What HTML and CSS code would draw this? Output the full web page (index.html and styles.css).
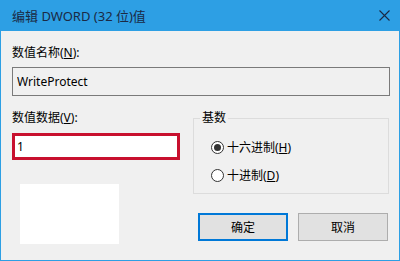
FILE: index.html
```html
<!DOCTYPE html>
<html>
<head>
  <meta charset="utf-8">
  <title>编辑 DWORD (32 位)值</title>
  <link rel="stylesheet" href="styles.css">
</head>
<body>
  <div class="dialog">
    <div class="title-bar">
      <span class="title">编辑 DWORD (32 位)值</span>
      <button class="close-btn" aria-label="关闭">
        <svg width="11" height="11" viewBox="0 0 11 11"><path d="M0.5 0.5L10.5 10.5M10.5 0.5L0.5 10.5" stroke="#1b2a44" stroke-width="1.1"/></svg>
      </button>
    </div>

    <div class="content">
      <label class="field-label" for="value-name">数值名称(<u>N</u>):</label>
      <input type="text" id="value-name" class="name-input" value="WriteProtect" readonly />

      <div class="data-row">
        <div class="left-col">
          <label class="field-label data-label" for="value-data">数值数据(<u>V</u>):</label>
          <input type="text" id="value-data" class="data-input" value="1" />
          <div class="blank-box"></div>
        </div>

        <div class="right-col">
          <fieldset class="base-group">
            <legend>基数</legend>
            <label class="radio">
              <input type="radio" name="base" checked />
              <span class="radio-mark"></span>
              <span>十六进制(<u>H</u>)</span>
            </label>
            <label class="radio">
              <input type="radio" name="base" />
              <span class="radio-mark"></span>
              <span>十进制(<u>D</u>)</span>
            </label>
          </fieldset>

          <div class="button-group">
            <button class="btn btn-default">确定</button>
            <button class="btn">取消</button>
          </div>
        </div>
      </div>
    </div>
  </div>
</body>
</html>
```

FILE: styles.css
```css
* {
  box-sizing: border-box;
}

body {
  margin: 0;
  background-color: #f0f0f0;
  font-family: "Noto Sans", "Noto Sans CJK SC", sans-serif;
  font-size: 12px;
  color: #000000;
}

.dialog {
  width: 400px;
  height: 261px;
  background-color: #f0f0f0;
  border: 1px solid #2d9fe4;
  border-top: none;
}

.title-bar {
  height: 31px;
  background-color: #2d9fe4;
  display: flex;
  align-items: center;
  justify-content: space-between;
  padding-left: 11px;
  padding-right: 9px;
}

.title {
  color: #1b2a44;
  font-size: 13px;
}

.close-btn {
  background: none;
  border: none;
  padding: 0;
  width: 11px;
  height: 11px;
  display: flex;
}

.content {
  padding: 14px 9px 0 11px;
}

.field-label {
  display: block;
  line-height: 16px;
  margin-bottom: 6px;
}

.name-input {
  display: block;
  width: 100%;
  height: 29px;
  border: 1px solid #7a7a7a;
  background-color: #f0f0f0;
  padding: 0 4px;
  font: inherit;
  color: #000000;
  outline: none;
}

.data-row {
  display: grid;
  grid-template-columns: 168px 196px;
  column-gap: 13px;
  margin-top: 14px;
}

.data-label {
  margin-bottom: 7px;
}

.data-input {
  display: block;
  width: 168px;
  height: 27px;
  border: 3px solid #c8102e;
  background-color: #ffffff;
  padding: 0 2px;
  font: inherit;
  color: #000000;
  outline: none;
}

.blank-box {
  width: 99px;
  height: 60px;
  margin-top: 24px;
  margin-left: 8px;
  background-color: #ffffff;
}

.base-group {
  margin: 0;
  border: 1px solid #dcdcdc;
  padding: 11px 8px 8px 6px;
  display: flex;
  flex-direction: column;
  gap: 8px;
}

.base-group legend {
  padding: 0 2px;
  line-height: 16px;
}

.radio {
  display: flex;
  align-items: center;
  height: 20px;
  padding-left: 11px;
  gap: 3px;
}

.radio input {
  display: none;
}

.radio-mark {
  width: 13px;
  height: 13px;
  border: 1px solid #333333;
  border-radius: 50%;
  background-color: #ffffff;
  display: flex;
  align-items: center;
  justify-content: center;
}

.radio input:checked + .radio-mark::after {
  content: "";
  width: 7px;
  height: 7px;
  border-radius: 50%;
  background-color: #333333;
}

.button-group {
  display: flex;
  gap: 10px;
  margin-top: 19px;
  padding-left: 5px;
}

.btn {
  width: 90px;
  height: 28px;
  background-color: #e1e1e1;
  border: 1px solid #adadad;
  font: inherit;
  color: #000000;
  padding: 0;
}

.btn-default {
  border: 2px solid #0078d7;
}
```
